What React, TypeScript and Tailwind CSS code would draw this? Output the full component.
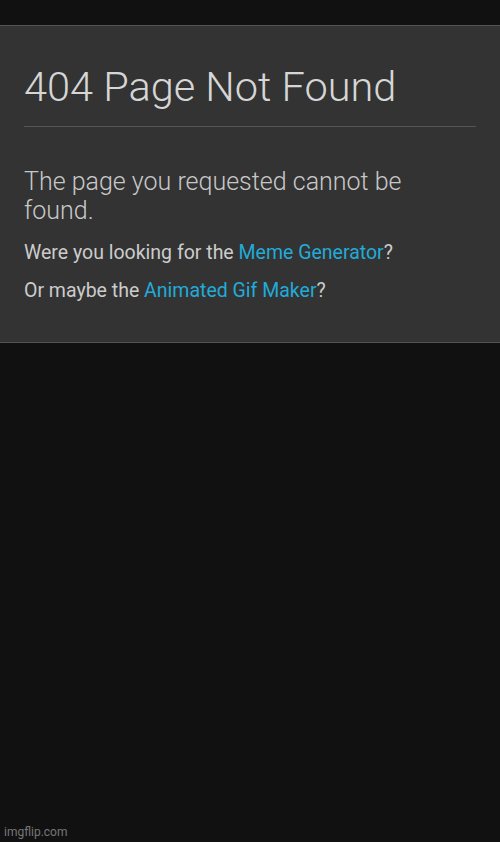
import React from 'react';

function App() {
  return (
    <div className="min-h-[842px] bg-[#111111] flex flex-col font-['Roboto',sans-serif] relative">
      <div className="h-[25px]" />
      <div className="bg-[#333333] border-y border-[#555555] px-6 pt-[37px] pb-[38px]">
        <h1 className="text-[41.5px] font-light text-[#d6d6d6] leading-[48px] pb-[15px] border-b border-[#555555]">
          404 Page Not Found
        </h1>
        <p className="mt-[40px] text-[25px] font-light text-[#c8c8c8] leading-[29px] pr-16">
          The page you requested cannot be found.
        </p>
        <p className="mt-[14px] text-[19.5px] text-[#cccccc] leading-[27px]">
          Were you looking for the <a href="#" className="text-[#22abd9]">Meme Generator</a>?
        </p>
        <p className="mt-[11px] text-[19.5px] text-[#cccccc] leading-[27px]">
          Or maybe the <a href="#" className="text-[#22abd9]">Animated Gif Maker</a>?
        </p>
      </div>
      <div className="flex-1" />
      <div className="px-[4px] pb-[3px] text-[12px] text-[#777777] leading-[14px]">imgflip.com</div>
    </div>
  );
}

export default App;
